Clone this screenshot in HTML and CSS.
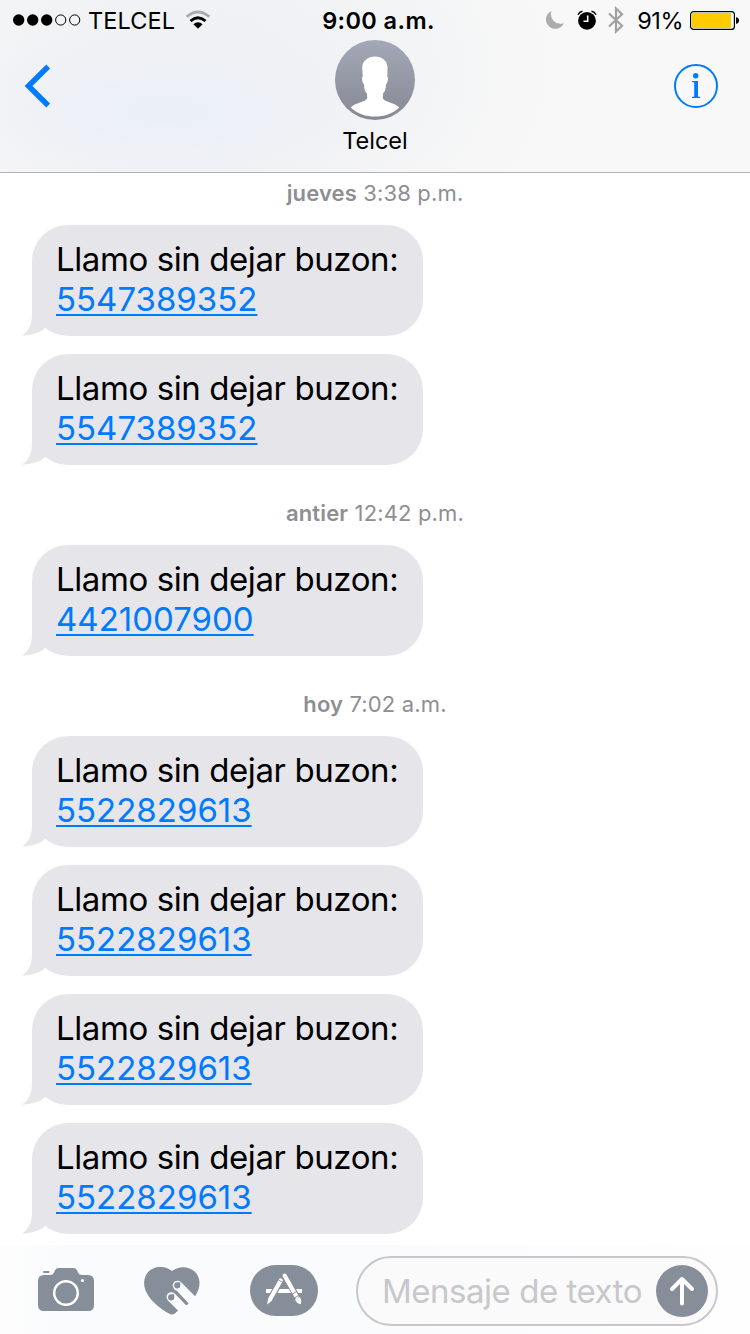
FILE: index.html
```html
<!DOCTYPE html>
<html lang="es">
<head>
    <meta charset="UTF-8">
    <meta name="viewport" content="width=device-width, initial-scale=1.0">
    <title>Telcel</title>
    <link rel="stylesheet" href="styles.css">
</head>
<body>
    <header class="header">
        <div class="status-bar">
            <div class="status-left">
                <svg class="signal" width="68" height="12" viewBox="0 0 68 12">
                    <circle cx="5.7" cy="6" r="5.7"/>
                    <circle cx="19.7" cy="6" r="5.7"/>
                    <circle cx="33.7" cy="6" r="5.7"/>
                    <circle cx="47.7" cy="6" r="5.1" fill="none" stroke="#000" stroke-width="1"/>
                    <circle cx="61.7" cy="6" r="5.1" fill="none" stroke="#000" stroke-width="1"/>
                </svg>
                <span class="carrier">TELCEL</span>
                <svg class="wifi" width="26" height="20" viewBox="0 0 26 20">
                    <path d="M1.6 6.8Q13 -2.8 24.4 6.8" fill="none" stroke="#acacae" stroke-width="2.8"/>
                    <path d="M5.5 11Q13 4.6 20.5 11" fill="none" stroke="#000" stroke-width="2.8"/>
                    <path d="M8.4 14.2Q13 10.4 17.6 14.2L13 18.8Z"/>
                </svg>
            </div>
            <div class="clock">9:00 a.m.</div>
            <div class="status-right">
                <svg class="moon" width="20" height="20" viewBox="0 0 20 20">
                    <path d="M6.5 1A9.3 9.3 0 1 0 18.8 13.2A9.6 9.6 0 0 1 6.5 1Z" fill="#acacac"/>
                </svg>
                <svg class="alarm" width="20" height="20" viewBox="0 0 20 20">
                    <circle cx="10" cy="10.8" r="8.9"/>
                    <path d="M1 4.800Q2.200 2 5.500 1.300M19 4.800Q17.800 2 14.500 1.300" fill="none" stroke="#000" stroke-width="1.4"/>
                    <path d="M10.7 5.5V11.2H6.500" fill="none" stroke="#fff" stroke-width="1.6"/>
                </svg>
                <svg class="bluetooth" width="16" height="28" viewBox="0 0 16 28">
                    <path d="M1 7.500L14 19.800L8 25.500V2.500L14 8.200L1 20.500" fill="none" stroke="#a0a0a0" stroke-width="2.2"/>
                </svg>
                <span class="percent">91%</span>
                <svg class="battery" width="50" height="20" viewBox="0 0 50 20">
                    <rect x=".6" y="1.6" width="43.8" height="17.8" rx="3" fill="#fff" stroke="#000" stroke-width="1.2"/>
                    <rect x="2" y="3" width="39" height="15" rx="1" fill="#ffcc00"/>
                    <path d="M46 7.2Q49 7.4 49 10.5T46 13.8Z"/>
                </svg>
            </div>
        </div>
        <nav class="nav">
            <a class="back" href="#" aria-label="Mensajes">
                <svg width="28" height="44" viewBox="0 0 28 44">
                    <path d="M24.2 2.500L4.5 22L24.2 41.500" fill="none" stroke="#007aff" stroke-width="5.4"/>
                </svg>
            </a>
            <div class="contact">
                <svg class="avatar" width="80" height="80" viewBox="0 0 80 80">
                    <defs>
                        <linearGradient id="avatar-bg" x1="0" y1="0" x2="0" y2="1">
                            <stop offset="0" stop-color="#a4a8b6"/>
                            <stop offset="1" stop-color="#868994"/>
                        </linearGradient>
                    </defs>
                    <circle cx="40" cy="40" r="40" fill="url(#avatar-bg)"/>
                    <path d="M40 16.5C47 16.5 52.2 20.5 52.5 27.5L52.3 36.5C53.6 37.5 52.8 42.5 51 44.5C50.8 49 50 52 48 53.5L47.8 58C48.5 62 59 62 64.4 67.5C57 74 49 76.6 40 76.6S23 74 15.6 67.5C21 62 31.5 62 32.2 58L32 53.5C30 52 29.2 49 29 44.5C27.2 42.5 26.4 37.5 27.7 36.5L27.2 27.5C27.5 20.5 33 16.5 40 16.5Z" fill="#fff"/>
                </svg>
                <div class="contact-name">Telcel</div>
            </div>
            <a class="info" href="#" aria-label="Detalles">
                <svg width="44" height="44" viewBox="0 0 44 44" fill="#007aff">
                    <circle cx="22" cy="22" r="21" fill="none" stroke="#007aff" stroke-width="2"/>
                    <circle cx="21.7" cy="11.7" r="2.7"/>
                    <path d="M18 17H24V32.6L26.2 33V34H18V33L20.2 32.6V18.4L18 18Z"/>
                </svg>
            </a>
        </nav>
    </header>

    <main class="messages">
        <div class="timestamp"><b>jueves</b> 3:38 p.m.</div>
        <div class="bubble">
            <svg class="tail" width="30" height="36" viewBox="0 0 30 36"><path d="M10 0V14C10 24 7 31 0 35.5C8 35.5 17 33 22 29L30 20V0Z"/></svg>
            <p>Llamo sin dejar buzon:</p>
            <a href="tel:5547389352">5547389352</a>
        </div>
        <div class="bubble">
            <svg class="tail" width="30" height="36" viewBox="0 0 30 36"><path d="M10 0V14C10 24 7 31 0 35.5C8 35.5 17 33 22 29L30 20V0Z"/></svg>
            <p>Llamo sin dejar buzon:</p>
            <a href="tel:5547389352">5547389352</a>
        </div>

        <div class="timestamp"><b>antier</b> 12:42 p.m.</div>
        <div class="bubble">
            <svg class="tail" width="30" height="36" viewBox="0 0 30 36"><path d="M10 0V14C10 24 7 31 0 35.5C8 35.5 17 33 22 29L30 20V0Z"/></svg>
            <p>Llamo sin dejar buzon:</p>
            <a href="tel:4421007900">4421007900</a>
        </div>

        <div class="timestamp"><b>hoy</b> 7:02 a.m.</div>
        <div class="bubble">
            <svg class="tail" width="30" height="36" viewBox="0 0 30 36"><path d="M10 0V14C10 24 7 31 0 35.5C8 35.5 17 33 22 29L30 20V0Z"/></svg>
            <p>Llamo sin dejar buzon:</p>
            <a href="tel:5522829613">5522829613</a>
        </div>
        <div class="bubble">
            <svg class="tail" width="30" height="36" viewBox="0 0 30 36"><path d="M10 0V14C10 24 7 31 0 35.5C8 35.5 17 33 22 29L30 20V0Z"/></svg>
            <p>Llamo sin dejar buzon:</p>
            <a href="tel:5522829613">5522829613</a>
        </div>
        <div class="bubble">
            <svg class="tail" width="30" height="36" viewBox="0 0 30 36"><path d="M10 0V14C10 24 7 31 0 35.5C8 35.5 17 33 22 29L30 20V0Z"/></svg>
            <p>Llamo sin dejar buzon:</p>
            <a href="tel:5522829613">5522829613</a>
        </div>
        <div class="bubble">
            <svg class="tail" width="30" height="36" viewBox="0 0 30 36"><path d="M10 0V14C10 24 7 31 0 35.5C8 35.5 17 33 22 29L30 20V0Z"/></svg>
            <p>Llamo sin dejar buzon:</p>
            <a href="tel:5522829613">5522829613</a>
        </div>
    </main>

    <footer class="toolbar">
        <svg class="camera" width="56" height="44" viewBox="0 0 56 44" fill="#868e99">
            <path d="M6 8H12Q15 8 16 5.5L17 3.2Q18 1 21 1H35Q38 1 39 3.2L40 5.5Q41 8 44 8H50Q56 8 56 14V38Q56 44 50 44H6Q0 44 0 38V14Q0 8 6 8Z"/>
            <rect x="5" y="4" width="6.5" height="2" rx="1"/>
            <circle cx="28" cy="26" r="11.8" fill="none" stroke="#fff" stroke-width="2.4"/>
            <circle cx="44.5" cy="13.5" r="1.6" fill="#fff"/>
        </svg>
        <svg class="heart" width="56" height="48" viewBox="0 0 56 48" fill="#868e99">
            <path d="M28 4C35 -1.500 46 -1.200 52 6C57 12 56.500 21 51.500 28.500L44 37L33 44.500Q30 48 27 47.500Q18 43.500 9 34.500C2 27 -1 20 .5 12.500C3 0 18 -4 28 4Z"/>
            <path d="M33.500 18.500L54 39M27.300 30L44 46.700" stroke="#fafbfc" stroke-width="9.600" stroke-linecap="round"/>
            <path d="M32 25L42.500 36.500" stroke="#868e99" stroke-width="2.800" stroke-linecap="round"/>
            <path d="M33.300 15.300H36.300V18.500A3.100 3.100 0 1 1 33.300 15.300ZM27.200 27.200H30.200V30.400A3.100 3.100 0 1 1 27.200 27.200Z"/>
        </svg>
        <svg class="apps" width="68" height="51" viewBox="0 0 68 51">
            <rect width="68" height="51" rx="25.5" fill="#868e99"/>
            <path d="M16 26H52" stroke="#fff" stroke-width="4"/>
            <path d="M31 15.500L19.500 35M34.700 10.500L47.500 33" stroke="#868e99" stroke-width="6.400"/>
            <path d="M30.700 15.500L20.500 33.500M34.600 10.600L46.500 31.500" stroke="#fff" stroke-width="4.200" stroke-linecap="round"/>
            <path d="M18.300 33L22.300 35.400L17 39.500ZM45 34.500L50 32Q52 35.500 50.800 39.300Q46.500 38.500 45 34.500Z" fill="#fff"/>
            <path d="M28.500 15L33 17.600M41.500 29.500L46.500 26.700M43.500 33.400L49.500 30" stroke="#868e99" stroke-width=".9"/>
        </svg>
        <div class="compose">
            <span class="placeholder">Mensaje de texto</span>
            <button class="send" aria-label="Enviar">
                <svg width="52" height="52" viewBox="0 0 52 52">
                    <path d="M26 38.5V14M16 24L26 14L36 24" fill="none" stroke="#fff" stroke-width="4" stroke-linecap="round" stroke-linejoin="round"/>
                </svg>
            </button>
        </div>
    </footer>
</body>
</html>
```
FILE: styles.css
```css
* {
    box-sizing: border-box;
}
body {
    margin: 0;
    height: 1334px;
    display: flex;
    flex-direction: column;
    overflow: hidden;
    font-family: Inter, "Liberation Sans", sans-serif;
    background-color: #fff;
    color: #000;
}
svg {
    display: block;
    flex-shrink: 0;
}
.header {
    height: 173px;
    flex-shrink: 0;
    border-bottom: 1px solid #b2b2b2;
    background: radial-gradient(ellipse 230px 90px at 165px 112px, #eaeff8 0%, rgba(236, 240, 247, 0.6) 50%, rgba(248, 248, 248, 0) 100%),
        radial-gradient(ellipse 360px 230px at 200px 70px, #eff0f3 0%, #f2f3f5 50%, #f8f8f8 100%);
}
.status-bar {
    height: 40px;
    display: grid;
    grid-template-columns: 1fr auto 1fr;
    align-items: center;
    padding: 0 10px 0 13px;
}
.status-left,
.status-right {
    display: flex;
    align-items: center;
}
.status-right {
    justify-content: flex-end;
}
.carrier {
    margin-left: 7px;
    font-size: 23.5px;
    letter-spacing: 0.1px;
}
.wifi {
    margin-left: 10px;
}
.clock {
    padding-left: 4px;
    font-size: 23.5px;
    font-weight: 600;
    letter-spacing: 0.4px;
}
.alarm {
    margin-left: 12px;
}
.bluetooth {
    margin-left: 11px;
}
.percent {
    margin-left: 13px;
    font-size: 23.5px;
    letter-spacing: -0.5px;
}
.battery {
    margin-left: 7px;
}
.nav {
    height: 132px;
    display: grid;
    grid-template-columns: 1fr auto 1fr;
    padding: 0 32px 0 24px;
}
.back {
    margin-top: 24px;
}
.contact {
    padding-left: 8px;
    display: flex;
    flex-direction: column;
    align-items: center;
}
.contact-name {
    margin-top: 6px;
    font-size: 23.5px;
    line-height: 30px;
}
.info {
    justify-self: end;
    margin-top: 24px;
}
.messages {
    flex: 1;
    padding-left: 32px;
}
.timestamp {
    height: 80px;
    padding: 33px 32px 0 0;
    font-size: 22px;
    line-height: 30px;
    letter-spacing: 0.15px;
    text-align: center;
    color: #8e8e93;
}
.timestamp:first-child {
    height: 52px;
    padding-top: 5px;
}
.timestamp b {
    font-weight: 600;
}
.bubble {
    position: relative;
    width: 391px;
    height: 111px;
    padding: 14px 24px 0;
    border-radius: 36px;
    background-color: #e5e5ea;
    font-size: 33px;
    line-height: 40px;
}
.bubble + .bubble {
    margin-top: 18px;
}
.bubble p {
    position: relative;
    margin: 0;
    letter-spacing: -0.41px;
    white-space: nowrap;
}
.bubble a {
    display: block;
    position: relative;
    width: max-content;
    color: #007aff;
    text-decoration-thickness: 2px;
    text-underline-offset: 3px;
    text-decoration-skip-ink: none;
}
/* little hook at the lower left corner */
.tail {
    position: absolute;
    left: -10px;
    bottom: 0;
    fill: #e5e5ea;
}
.toolbar {
    height: 89px;
    flex-shrink: 0;
    display: flex;
    align-items: flex-start;
    padding: 11px 32px 0 38px;
    background: linear-gradient(90deg, #fdfdfd 0, #fafbfd 60px, #fafbfd 400px, #fefefe 750px);
}
.camera {
    margin-top: 11px;
}
.heart {
    margin: 11px 0 0 50px;
}
.apps {
    margin: 9px 0 0 50px;
}
.compose {
    width: 362px;
    height: 70px;
    margin-left: auto;
    display: flex;
    align-items: center;
    justify-content: space-between;
    padding: 0 8px 0 24px;
    border: 2px solid #c7c7cc;
    border-radius: 35px;
    background-color: #fafafa;
}
.placeholder {
    font-size: 33px;
    letter-spacing: -0.48px;
    color: #c7c7cc;
    white-space: nowrap;
}
.send {
    width: 52px;
    height: 52px;
    padding: 0;
    border: none;
    border-radius: 50%;
    background-color: #868e99;
}
```
